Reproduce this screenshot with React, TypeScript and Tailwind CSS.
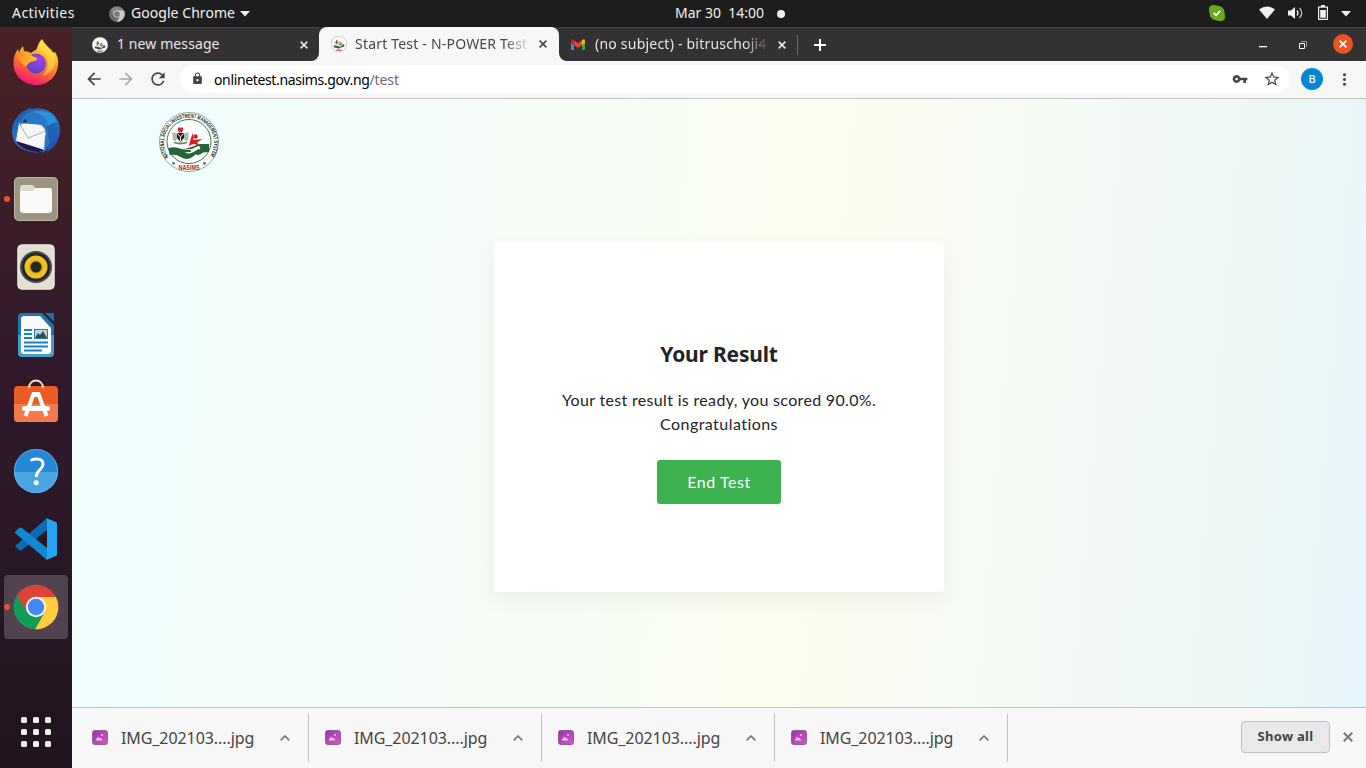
import React from "react";
import { MdArrowBack, MdArrowForward, MdRefresh, MdLock, MdVpnKey, MdStarBorder, MdMoreVert } from "react-icons/md";

const UI = "font-['Noto_Sans','Open_Sans',sans-serif]";

function Seal({ size, detailed = false }: { size: number; detailed?: boolean }) {
  return (
    <svg width={size} height={size} viewBox="0 0 60 60" className="shrink-0">
      <circle cx="30" cy="30" r="29.5" fill="#fff" stroke={detailed ? "#6f9a78" : "#9aa89d"} strokeWidth={detailed ? 0.8 : 2} />
      {detailed ? (
        <>
          <defs>
            <path id="ring" d="M9.500 45 A25 25 0 1 1 50.500 45" />
          </defs>
          <text fontSize="5.800" fontWeight="700" fill="#1c1c1c" fontFamily="Liberation Sans, sans-serif">
            <textPath href="#ring" textLength="107" lengthAdjust="spacingAndGlyphs" startOffset="0">
              NATIONAL SOCIAL INVESTMENT MANAGEMENT SYSTEM
            </textPath>
          </text>
          <text x="19.500" y="57.800" fontSize="7" fontWeight="700" fill="#b8202a" fontFamily="Liberation Sans, sans-serif" textLength="21" lengthAdjust="spacingAndGlyphs">NASIMS</text>
          <circle cx="30" cy="29.500" r="22" fill="none" stroke="#3f784c" strokeWidth="1" />
          <circle cx="14.500" cy="51.300" r="1.500" fill="#4e8f5b" />
          <circle cx="45.500" cy="51.300" r="1.500" fill="#4e8f5b" />
        </>
      ) : (
        <path d="M20 53h20" stroke="#c4544f" strokeWidth="5" />
      )}
      <path d="M18.500 17l1.500-2 1.500 1 1.500-1 1.500 2-1.500 3.500h-3z" fill="#d22c30" />
      <path d="M13.500 20l4.500 1.500v5l-1.500 3-3-2zM29.500 20l-4.500 1.500v5l1.500 3 3-2z" fill="#b4b8ae" />
      <path d="M18 21h7v5l-3.500 4-3.500-4z" fill="#1d2420" />
      <path d="M18.500 21.500l3 3.500 3-3.500M21.500 25v4" stroke="#fff" fill="none" strokeWidth=".9" />
      <path d="M15 30.500q6.500 2 13 0" stroke="#5c8d56" strokeWidth="1.800" fill="none" />
      <circle cx="36.500" cy="24.500" r="2.200" fill="#cc2229" />
      <path d="M29.500 35l2.500-9 2-5.500.5 7.500 9-1-5.500 3.500 2.500 3-5.500-1.500-3.500 1z" fill="#cc2229" />
      <path d="M9.500 36q7-2 13 1l9 1q2 1.500-1 2l-5 .5q5 2 9-.5l5-3q2 0 1 2l-7 6q-6 4-12 0-4-3-11-2z" fill="#27643a" />
      <path d="M26 37l8-2.500q4-2.500 7-2.500l9 0v8l-6 .5q-4 4-8 1.500l5-5q1-3-2-3l-6 3z" fill="#27643a" />
    </svg>
  );
}

function Firefox() {
  return (
    <svg width="46" height="46" viewBox="0 0 46 46" className="mb-0.5">
      <defs>
        <linearGradient id="ffa" x1=".75" y1="0" x2=".35" y2="1">
          <stop offset="0" stopColor="#fff24a" />
          <stop offset=".35" stopColor="#ffb42b" />
          <stop offset=".65" stopColor="#ff6435" />
          <stop offset="1" stopColor="#f0127b" />
        </linearGradient>
        <radialGradient id="ffb" cx=".65" cy=".3" r=".7">
          <stop offset="0" stopColor="#a044e6" />
          <stop offset="1" stopColor="#5a46c8" />
        </radialGradient>
        <linearGradient id="ffc" x1="0" y1="0" x2="1" y2=".4">
          <stop offset="0" stopColor="#ff8a22" />
          <stop offset="1" stopColor="#ffc22f" />
        </linearGradient>
      </defs>
      <path d="M29 0c2 5 8 9 11 14l2-1c3 5 3.500 8 3 13C44 38 35 46 23 46S1 37 .5 25C.3 19 2 14 5 10l1 4c1-3 2-5 4-7l1 5 3 1 4 1c3-3 5-2 6-5 1-4 3-7 5-9z" fill="url(#ffa)" />
      <path d="M29 1c-6 8 2 11 5 18 3 8-1 14-5 18 10-2 16-12 12-23C38 9 31 6 29 1z" fill="#ffe047" opacity=".6" />
      <circle cx="23" cy="24.500" r="10" fill="url(#ffb)" />
      <path d="M5 18c3-5 9-7 12-4l2 3 5 2c0 2-1 3-5 3.500-4 1-4 3-6 5-3-2-7-5-8-9.500z" fill="url(#ffc)" />
    </svg>
  );
}

function Thunderbird() {
  return (
    <svg width="50" height="48" viewBox="0 0 50 48">
      <defs>
        <linearGradient id="tba" x1="0" y1="0" x2="1" y2="1">
          <stop offset="0" stopColor="#1a4fa3" />
          <stop offset=".5" stopColor="#2a7fd4" />
          <stop offset="1" stopColor="#1b3f9c" />
        </linearGradient>
      </defs>
      <path d="M19 1l3 1C38-1 49 10 49 23c0 11-5 17-13 22l1-3-7 5 2-3c-4 2-8 2-10 1C9 44 1 36 1 24 1 14 8 5 17 2z" fill="url(#tba)" />
      <path d="M5 34l8 1 19 8-4 2C15 44 8 40 5 34z" fill="#26134c" />
      <path d="M8 16l27 2-1 25L5 34z" fill="#f6f6f6" />
      <path d="M8 16l9 15 18-7" fill="none" stroke="#b8bcc0" strokeWidth="1.200" />
      <path d="M9 19c0-10 10-17 20-15 8 2 14 8 15 16-1 9-4 15-11 23 1-7 0-11 2-16-1-7-4-10-11-10-5 0-12-3-15 2z" fill="#2878c5" />
      <path d="M22 5c9 2 15 7 15 14l9-4C42 6 33 2 22 5z" fill="#2f9bdf" opacity=".75" />
      <path d="M36 19l9-4-2 6 4-1-5 7 3 0-7 8z" fill="#1d62b4" />
      <circle cx="14" cy="14" r="1.700" fill="#1c2c48" />
    </svg>
  );
}

function Files() {
  return (
    <svg width="46" height="46" viewBox="0 0 46 46">
      <rect x="1" y="1" width="44" height="44" rx="5" fill="#9c957f" />
      <rect x="1.500" y="1.500" width="43" height="43" rx="4.500" fill="none" stroke="#bdb7a5" />
      <path d="M7 12q0-3 2-3h10q2 0 3 3l14 0v8H7z" fill="#dedbd2" />
      <path d="M7 15h13l3-3h14q2 0 2 2v20q0 3-3 3H10q-3 0-3-3z" fill="#faf9f7" />
    </svg>
  );
}

function Rhythmbox() {
  return (
    <svg width="38" height="46" viewBox="0 0 38 46">
      <rect x=".8" y=".8" width="36.400" height="44.400" rx="4" fill="#e4dfd3" stroke="#f1eee8" />
      <circle cx="19" cy="23" r="16" fill="#474747" />
      <circle cx="19" cy="23" r="14" fill="#22232b" />
      <circle cx="19" cy="23" r="11.500" fill="#efc31c" />
      <circle cx="19" cy="23" r="7" fill="#d5a518" />
      <circle cx="19" cy="23" r="5.500" fill="#272727" />
    </svg>
  );
}

function Writer() {
  return (
    <svg width="38" height="46" viewBox="0 0 38 46">
      <path d="M5 1h20l12 12v28q0 4-4 4H5q-4 0-4-4V5q0-4 4-4z" fill="#1d76ab" />
      <path d="M1 23h36v18q0 4-4 4H5q-4 0-4-4z" fill="#4b9bcb" />
      <path d="M28 1h8q1 0 1 1v8z" fill="#1d6fa6" />
      <path d="M7 4h16l11 12v23q0 3-3 3H7q-3 0-3-3V7q0-3 3-3z" fill="#fafafa" />
      <path d="M7 18h8M7 22h8M7 26h8M7 30.500h24M7 34.500h24M7 38.500h18" stroke="#1b80bd" strokeWidth="2" />
      <rect x="17.500" y="17.500" width="13" height="9" fill="#a9dcf6" stroke="#1b80bd" />
      <path d="M18 26l3-5 2 2 3-4 4 7z" fill="#444" />
      <circle cx="28.500" cy="19.500" r="1.400" fill="#f1cc2c" />
    </svg>
  );
}

function Software() {
  return (
    <svg width="46" height="44" viewBox="0 0 46 44" className="mb-1">
      <rect x="1" y="7" width="44" height="36" rx="4" fill="#ee5a24" />
      <path d="M1 25h44v14q0 4-4 4H5q-4 0-4-4z" fill="#f27a4a" />
      <path d="M16 9C16-1 30-1 30 9" fill="none" stroke="#f3dfb8" strokeWidth="2" />
      <path d="M12.500 37l8-22h5l8 22M20.500 16h5" fill="none" stroke="#fff" strokeWidth="4" />
      <rect x="9" y="27" width="28" height="5" rx="2.500" fill="#fff" />
    </svg>
  );
}

function Help() {
  return (
    <svg width="46" height="46" viewBox="0 0 46 46">
      <circle cx="23" cy="23" r="22" fill="#2389d7" />
      <path d="M1 24h44a22 21 0 0 1-44 0z" fill="#4ba4e2" />
      <circle cx="23" cy="23" r="21.600" fill="none" stroke="#63b2e8" strokeWidth=".8" />
      <path d="M17.500 12.500c4-2.500 13-2.500 12.500 4-.3 5-7 6-6.800 12.500" fill="none" stroke="#fff" strokeWidth="3" />
      <circle cx="23.200" cy="34.700" r="2.500" fill="#fff" />
    </svg>
  );
}

function Code() {
  return (
    <svg width="44" height="44" viewBox="0 0 44 44">
      <path d="M1 29l4 4q1.500 1 3 0L33 13V1z" fill="#0a6bb0" />
      <path d="M1 15l4-4q1.500-1 3 0l25 20v12L1 16z" fill="#1287d3" />
      <path d="M32 1l10 4q1 .5 1 2v30q0 1.500-1 2l-10 4q1-1 1-3V4q0-2-1-3z" fill="#27a3f4" />
    </svg>
  );
}

function Chrome({ size = 46, mono = false }: { size?: number; mono?: boolean }) {
  return (
    <svg width={size} height={size} viewBox="0 0 46 46" className="shrink-0">
      <circle cx="23" cy="23" r="22.300" fill={mono ? "#858585" : "#db4437"} />
      <path d="M23 13h19.900A22.300 22.300 0 0 1 22 45.300L31.700 28z" fill={mono ? "#c8c8c8" : "#ffcd40"} />
      <path d="M3.700 11.800A22.300 22.300 0 0 0 22 45.300L31.700 28 23 33 14.300 28z" fill={mono ? "#6b6b6b" : "#0f9d58"} />
      <circle cx="23" cy="23" r="10.200" fill={mono ? "#e8e8e8" : "#f4f4f4"} />
      <circle cx="23" cy="23" r="8.200" fill={mono ? "#777" : "#4587f4"} />
    </svg>
  );
}

function Gmail() {
  return (
    <svg width="14" height="11" viewBox="0 0 14 11" className="shrink-0">
      <path d="M0 2v8q0 1 1 1h2V4z" fill="#4285f4" />
      <path d="M14 2v8q0 1-1 1h-2V4z" fill="#34a853" />
      <path d="M11 1.300l1-.8q2-.8 2 1.500v2l-3 2z" fill="#fbbc04" />
      <path d="M3 1.300L2 .5Q0-.3 0 2v2l3 2z" fill="#c5221f" />
      <path d="M3 1.300l4 3 4-3V6L7 9 3 6z" fill="#ea4335" />
    </svg>
  );
}

function Cross({ size = 8, className = "" }: { size?: number; className?: string }) {
  return (
    <svg width={size} height={size} viewBox="0 0 8 8" className={`shrink-0 ${className}`}>
      <path d="M.6.6l6.800 6.800M7.400.6L.6 7.400" stroke="currentColor" strokeWidth="1.600" />
    </svg>
  );
}

const dock = [
  { name: "Firefox", icon: <Firefox /> },
  { name: "Thunderbird", icon: <Thunderbird /> },
  { name: "Files", icon: <Files />, running: true },
  { name: "Rhythmbox", icon: <Rhythmbox /> },
  { name: "Writer", icon: <Writer /> },
  { name: "Software", icon: <Software /> },
  { name: "Help", icon: <Help /> },
  { name: "Code", icon: <Code /> },
  { name: "Chrome", icon: <Chrome />, running: true, active: true },
];

function TopBar() {
  return (
    <header className="flex h-[27px] shrink-0 items-center bg-[#1d1d1d] text-[14px] text-[#f2f2f2]">
      <span className="-mt-0.5 ml-3 w-[62px] tracking-[0.45px] whitespace-nowrap">Activities</span>
      <span className="ml-[35px] flex"><Chrome size={16} mono /></span>
      <span className="-mt-0.5 ml-1.5 w-[104px] tracking-[0.05px] whitespace-nowrap">Google Chrome</span>
      <svg className="ml-[5px]" width="10" height="6"><path d="M0 0h10L5 5.500z" fill="#f2f2f2" /></svg>
      <span className="-mt-0.5 ml-[425px] w-[89px] whitespace-pre">Mar 30  14:00</span>
      <span className="ml-[13px] size-2 rounded-full bg-[#f2f2f2]" />
      <svg className="-mt-0.5 ml-[424px]" width="16" height="16" viewBox="0 0 16 16">
        <path d="M4.500 0q2 0 3.500.5Q15.500 1 15.500 8q.5 1.500.5 3.500 0 4.500-4.500 4.500-2 0-3.500-.5Q.5 15 .5 8 0 6.500 0 4.500 0 0 4.500 0z" fill="#65a91c" />
        <path d="M4.800 8l2.400 2.300 4-4.500" stroke="#fff" strokeWidth="1.800" fill="none" />
      </svg>
      <svg className="-mt-0.5 ml-[34px]" width="16" height="13"><path d="M0 3.500Q8-2.500 16 3.500L8 13z" fill="#f2f2f2" /></svg>
      <svg className="-mt-0.5 ml-[13px]" width="15" height="14" viewBox="0 0 15 14">
        <path d="M0 4.500h3L7 1v12L3 9.500H0z" fill="#f2f2f2" />
        <path d="M9 4.500q2 2.500 0 5" stroke="#f2f2f2" strokeWidth="1.300" fill="none" />
        <path d="M11.500 2q4.500 5 0 10" stroke="#bbb" strokeWidth="1.300" fill="none" />
      </svg>
      <svg className="-mt-0.5 ml-[15px]" width="10" height="15" viewBox="0 0 10 15">
        <path d="M3 0h4v1.500h3V15H0V1.500h3z" fill="#f2f2f2" />
        <path d="M1.200 2.700h7.600v11.100H1.200z" fill="#1d1d1d" />
        <path d="M2.200 5h5.600v7.800H2.200z" fill="#f2f2f2" />
      </svg>
      <svg className="ml-[13px]" width="10" height="6"><path d="M0 0h10L5 5.500z" fill="#f2f2f2" /></svg>
    </header>
  );
}

function Dock() {
  return (
    <nav className="flex w-[72px] shrink-0 flex-col bg-linear-to-b from-[#4a2124] via-[#301a2c] via-45% to-[#21141e] pt-0.5">
      {dock.map((d) => (
        <div key={d.name} className="flex h-[68px] items-center pl-1">
          <div className={d.active ? "flex size-16 items-center rounded-[4px] bg-[#51434f]" : "flex size-16 items-center"}>
            <span className={d.running ? "size-[6px] rounded-full bg-[#e95420]" : "size-[6px]"} />
            <span className="flex w-[52px] justify-center">{d.icon}</span>
          </div>
        </div>
      ))}
      <div className="mt-auto mb-[21px] ml-[21px] grid w-[30px] grid-cols-3 gap-[6px]">
        {Array.from({ length: 9 }, (_, i) => (
          <span key={i} className="size-[6px] rounded-[1.500px] bg-[#f0eeee]" />
        ))}
      </div>
    </nav>
  );
}

function TabStrip() {
  return (
    <div className="flex h-[34px] shrink-0 bg-[#f7f7f7] text-[14px]">
      <div className="flex w-[247px] items-center rounded-br-[8px] border-t border-[#484748] bg-[#333132] pl-5 text-[#e6e6e6]">
        <Seal size={16} />
        <span className="-mt-0.5 ml-[9px] w-[183px] tracking-[0.1px] whitespace-nowrap">1 new message</span>
        <Cross />
      </div>
      <div className="flex w-[240px] shrink-0 bg-[#333132]">
        <div className="flex w-full items-center rounded-t-[8px] bg-[#f7f7f7] pl-3 text-[#45484b]">
          <Seal size={16} />
          <span className="-mt-0.5 ml-2 w-[174px] overflow-hidden tracking-[0.2px] whitespace-nowrap [mask-image:linear-gradient(to_right,#000_86%,#0003_98%,transparent)]">Start Test - N-POWER Test</span>
          <Cross className="ml-[10px]" />
        </div>
      </div>
      <div className="flex flex-1 items-center rounded-bl-[8px] border-t border-[#484748] bg-[#333132] pl-3 text-[#e6e6e6]">
        <Gmail />
        <span className="-mt-0.5 ml-[10px] w-[173px] overflow-hidden tracking-[0.22px] whitespace-nowrap [mask-image:linear-gradient(to_right,#000_86%,#0003_98%,transparent)]">(no subject) - bitruschoji4</span>
        <Cross className="ml-[10px]" />
        <span className="ml-[11px] h-5 w-px bg-[#6a6869]" />
        <svg className="ml-4" width="12" height="12"><path d="M6 0v12M0 6h12" stroke="#fff" strokeWidth="2" /></svg>
        <svg className="mt-[5px] ml-auto" width="8" height="2"><path d="M0 0h8v1.300H0z" fill="#fff" /></svg>
        <svg className="ml-8" width="8" height="8" viewBox="0 0 8 8">
          <path d="M2 .5h5.500V6" stroke="#999" fill="none" />
          <path d="M.5 2.500h5v5h-5z" stroke="#fff" fill="none" />
        </svg>
        <span className="-mt-0.5 mr-[13px] ml-[26px] flex size-5 items-center justify-center rounded-full bg-[#e95420] text-white">
          <Cross />
        </span>
      </div>
    </div>
  );
}

function Toolbar() {
  return (
    <div className="flex h-[38px] shrink-0 items-center border-b border-[#c1c3c3] bg-[#f7f7f7] pb-px text-[#444]">
      <MdArrowBack size={20} className="ml-3" />
      <MdArrowForward size={20} className="ml-3 text-[#a9a9a9]" />
      <MdRefresh size={20} className="ml-3" />
      <div className="ml-3 flex h-7 w-[1110px] items-center rounded-full bg-white">
        <MdLock size={13} className="mb-0.5 ml-[11px]" />
        <span className="ml-[10px] text-[14px] tracking-[-0.36px] whitespace-nowrap text-black">
          onlinetest.nasims.gov.ng<span className="tracking-[-0.1px] text-[#6b6b6b]">/test</span>
        </span>
        <MdVpnKey size={16} className="ml-auto" />
        <MdStarBorder size={18} className="mr-[9px] ml-[15px]" />
      </div>
      <span className="ml-[11px] flex size-[22px] items-center justify-center rounded-full bg-[#0288d1] text-[11px] font-medium text-white">B</span>
      <MdMoreVert size={19} className="ml-3" />
    </div>
  );
}

function DownloadItem() {
  return (
    <div className="flex h-12 w-[233px] items-center border-r border-[#c0c0c0]">
      <svg width="16" height="15" viewBox="0 0 16 15" className="-mt-0.5 ml-[16px]">
        <defs><linearGradient id="img" x1="0" x2="1" y2="1"><stop stopColor="#9c30ad" /><stop offset="1" stopColor="#d65bc8" /></linearGradient></defs>
        <rect x=".6" y=".6" width="14.800" height="13.800" rx="2" fill="url(#img)" stroke="#8c5593" />
        <path d="M3.500 10.500l2.500-4 1.500 2 1-1 2 3z" fill="#f0c6ee" />
        <circle cx="10" cy="5" r="1" fill="#f0c6ee" />
      </svg>
      <span className="ml-[13px] w-[134px] text-[16px] tracking-[-0.08px] whitespace-nowrap text-[#444]">IMG_202103....jpg</span>
      <svg className="ml-[25px]" width="10" height="6"><path d="M.7 5.300L5 1l4.300 4.300" stroke="#777" strokeWidth="1.700" fill="none" /></svg>
    </div>
  );
}

export default function App() {
  return (
    <div className={`flex h-[768px] w-[1366px] flex-col overflow-hidden ${UI}`}>
      <TopBar />
      <div className="flex min-h-0 flex-1">
        <Dock />
        <div className="flex flex-1 flex-col">
          <TabStrip />
          <Toolbar />
          <main className="flex flex-1 flex-col bg-[linear-gradient(95deg,#f0fffe_0%,#f1fdfc_10%,#f4fcf9_22%,#f6fdf6_36%,#f9fdf3_48%,#fcfdee_57%,#fbfcef_59%,#f8fcf3_65%,#f3f9f4_77%,#edf7f6_90%,#e9f6f9_96%,#e6f4fd_100%)]">
            <div className="mt-[13px] ml-[87px] flex h-[60px]"><Seal size={60} detailed /></div>
            <section className="mt-[70px] flex h-[350px] w-[450px] flex-col items-center self-center rounded-[4px] bg-white shadow-[0_8px_24px_rgba(0,0,0,0.06)]">
              <h1 className="mt-[98px] text-[21px] leading-7 font-bold tracking-[-0.2px] text-[#212529]">Your Result</h1>
              <p className="mt-5 text-center font-['Lato',sans-serif] text-[16px] leading-6 tracking-[0.33px] text-[#212529]">
                Your test result is ready, you scored 90.0%.<br /><span className="tracking-[0.45px]">Congratulations</span>
              </p>
              <button className="mt-6 h-11 w-[124px] rounded-[3px] bg-[#3eb250] font-['Lato',sans-serif] text-[16px] tracking-[0.55px] text-white">End Test</button>
            </section>
          </main>
          <footer className="flex h-[61px] shrink-0 items-center border-t border-[#bfc1c1] bg-[#f7f7f7] pl-1">
            {[0, 1, 2, 3].map((i) => <DownloadItem key={i} />)}
            <button className="-mt-0.5 ml-auto h-8 w-[89px] rounded-[4px] border border-[#c0c0c0] bg-[#e9e9e9] text-[13px] font-bold tracking-[0.3px] text-[#444]">Show all</button>
            <Cross size={10} className="-mt-0.5 mr-[13px] ml-[13px] text-[#777]" />
          </footer>
        </div>
      </div>
    </div>
  );
}
